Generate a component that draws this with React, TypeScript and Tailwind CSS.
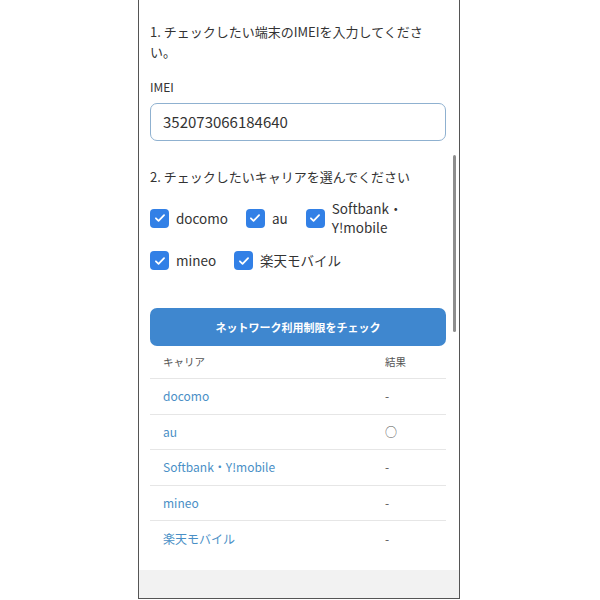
import React from 'react';

const carriers = ['docomo', 'au', 'Softbank・Y!mobile', 'mineo', '楽天モバイル'];
const results: Record<string, string> = { au: '○' };

const CheckIcon = () => (
  <span className="flex h-[19px] w-[19px] shrink-0 items-center justify-center rounded-[4px] bg-[#3280e6]">
    <svg width="14" height="14" viewBox="0 0 24 24" fill="none" stroke="white" strokeWidth="3" strokeLinecap="round" strokeLinejoin="round">
      <path d="M5 12.5l4.5 4.5L19 7" />
    </svg>
  </span>
);

const CheckItem: React.FC<{ children: React.ReactNode }> = ({ children }) => (
  <label className="flex items-center gap-[7px]">
    <CheckIcon />
    <span className="text-[13.5px] leading-[19px] text-[#333]">{children}</span>
  </label>
);

export default function App() {
  return (
    <div
      className="h-[600px] w-[600px] bg-white"
      style={{ fontFamily: '"Noto Sans CJK JP", "Noto Sans", sans-serif' }}
    >
      <div className="relative ml-[138px] flex h-[599px] w-[322px] flex-col border-x border-b border-[#555]">
        <div className="flex-1 pl-[11px] pr-[13px] pt-[22px]">
          <p className="text-[13px] leading-[20px] text-[#333]">
            1. チェックしたい端末のIMEIを入力してください。
          </p>
          <div className="mt-[16px] text-[12px] leading-[18px] text-[#333]">IMEI</div>
          <div className="mt-[7px] flex h-[38px] items-center rounded-[7px] border border-[#8fb1d0] px-[12px] text-[15px] text-[#333]">
            352073066184640
          </div>
          <p className="mt-[26px] text-[13px] leading-[20px] text-[#333]">
            2. チェックしたいキャリアを選んでください
          </p>
          <div className="mt-[12px] flex flex-col gap-y-[14px]">
            <div className="flex items-center gap-x-[18px]">
              <CheckItem>docomo</CheckItem>
              <CheckItem>au</CheckItem>
              <CheckItem>
                Softbank・
                <br />
                Y!mobile
              </CheckItem>
            </div>
            <div className="flex items-center gap-x-[18px]">
              <CheckItem>mineo</CheckItem>
              <CheckItem>楽天モバイル</CheckItem>
            </div>
          </div>
          <button className="mt-[38px] flex h-[38px] w-full items-center justify-center rounded-[7px] bg-[#3f87cf] text-[11px] font-bold text-white">
            ネットワーク利用制限をチェック
          </button>
          <div className="text-[12px]">
            <div className="grid h-[32px] grid-cols-[235px_1fr] items-center text-[10.5px] text-[#555]">
              <span className="pl-[13px]">キャリア</span>
              <span>結果</span>
            </div>
            {carriers.map((c) => (
              <div
                key={c}
                className="grid h-[35.6px] grid-cols-[235px_1fr] items-center border-t border-[#e6e6e6]"
              >
                <span className="pl-[13px] text-[#4a8fc6]">{c}</span>
                <span className="text-[#555]">{results[c] ?? '-'}</span>
              </div>
            ))}
          </div>
        </div>
        <div className="h-[28px] bg-[#f2f2f2]" />
        <div className="absolute right-[3px] top-[155px] h-[177px] w-[3px] rounded-full bg-[#8e8e8e]" />
      </div>
    </div>
  );
}
